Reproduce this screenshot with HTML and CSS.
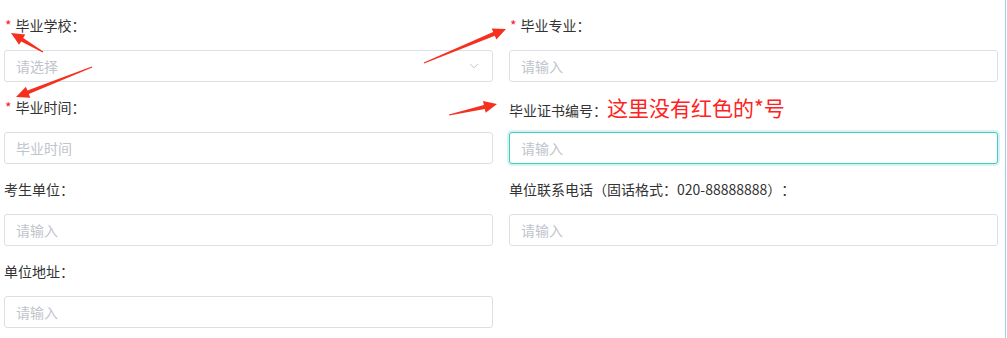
FILE: index.html
```html
<!DOCTYPE html>
<html lang="zh-CN">
<head>
    <meta charset="UTF-8">
    <meta name="viewport" content="width=device-width, initial-scale=1.0">
    <title>考生信息</title>
    <link rel="stylesheet" href="styles.css">
</head>
<body>
    <div class="page">
        <form class="info-form">
            <!-- 第一行 -->
            <div class="form-item">
                <label class="form-label"><span class="required">*</span>毕业学校：</label>
                <div class="form-select">
                    <span class="select-placeholder">请选择</span>
                    <svg class="select-arrow" width="10" height="6" viewBox="0 0 10 6">
                        <path d="M1 0.8 L5 4.8 L9 0.8" fill="none" stroke="#c0c4cc" stroke-width="1"/>
                    </svg>
                </div>
            </div>
            <div class="form-item">
                <label class="form-label"><span class="required">*</span>毕业专业：</label>
                <input type="text" class="form-control" placeholder="请输入">
            </div>

            <!-- 第二行 -->
            <div class="form-item">
                <label class="form-label"><span class="required">*</span>毕业时间：</label>
                <input type="text" class="form-control" placeholder="毕业时间">
            </div>
            <div class="form-item">
                <label class="form-label">毕业证书编号：<span class="note">这里没有红色的*号</span></label>
                <input type="text" class="form-control is-focus" placeholder="请输入">
            </div>

            <!-- 第三行 -->
            <div class="form-item">
                <label class="form-label">考生单位：</label>
                <input type="text" class="form-control" placeholder="请输入">
            </div>
            <div class="form-item">
                <label class="form-label">单位联系电话（固话格式：020-88888888）：</label>
                <input type="text" class="form-control" placeholder="请输入">
            </div>

            <!-- 第四行 -->
            <div class="form-item">
                <label class="form-label">单位地址：</label>
                <input type="text" class="form-control" placeholder="请输入">
            </div>
        </form>

        <!-- 标注箭头 -->
        <svg class="marks" width="1006" height="338" viewBox="0 0 1006 338">
            <polygon points="43.3,51.6 23.2,37.9 25.3,34.5 11,33 19.1,44.8 21.2,41.4 42.7,52.4"/>
            <polygon points="91.8,66.5 27.4,90.4 25.9,86.7 16,97 30.3,97.8 28.8,94.1 92.2,67.5"/>
            <polygon points="424.2,63.5 494.8,35.8 496.3,39.5 506,29 491.7,28.4 493.2,32.1 423.8,62.5"/>
            <polygon points="449.1,115.5 484.8,108.9 485.7,112.8 497,104 483,101.1 483.9,105 448.9,114.5"/>
        </svg>
    </div>
</body>
</html>
```

FILE: styles.css
```css
body {
    margin: 0;
    font-family: "Noto Sans CJK SC", "Microsoft YaHei", sans-serif;
    font-size: 14px;
    color: #333;
    background-color: #fff;
    text-spacing-trim: space-all;
}

.page {
    position: relative;
    width: 1005px;
    height: 338px;
    border-right: 1px solid #9ccff0;
    box-sizing: content-box;
}

.info-form {
    display: grid;
    grid-template-columns: 489px 489px;
    column-gap: 16px;
    padding: 15px 0 0 4px;
}

.form-item {
    display: flex;
    flex-direction: column;
    margin-bottom: 15px;
}

.form-label {
    display: block;
    height: 20px;
    line-height: 20px;
    margin-bottom: 15px;
    color: #333;
    white-space: nowrap;
}

.required {
    color: #f5222d;
    margin-right: 4px;
    margin-left: 1px;
}

.note {
    font-size: 21px;
    color: #ff2222;
}

.form-control,
.form-select {
    width: 100%;
    height: 32px;
    box-sizing: border-box;
    border: 1px solid #dcdfe6;
    border-radius: 3px;
    padding: 0 11px;
    font-family: inherit;
    font-size: 14px;
    color: #333;
    background-color: #fff;
    outline: none;
}

.form-control::placeholder {
    color: #c0c4cc;
}

.form-control.is-focus {
    border-color: #3fcbc6;
    box-shadow: 0 0 0 2px rgba(63, 203, 198, 0.22);
}

.form-select {
    display: flex;
    align-items: center;
    justify-content: space-between;
    padding-right: 13px;
}

.select-placeholder {
    color: #c0c4cc;
}

/* 标注 */
.marks {
    position: absolute;
    left: 0;
    top: 0;
    pointer-events: none;
}

.marks polygon {
    fill: #f5301e;
}
```
